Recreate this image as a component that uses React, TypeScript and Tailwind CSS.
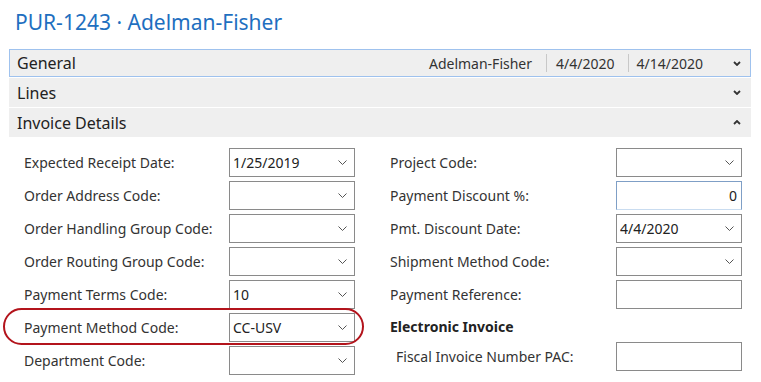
import React from "react";

type Field = {
  label: string;
  value?: string;
  dropdown?: boolean;
  focused?: boolean;
  align?: "left" | "right";
};

const leftFields: Field[] = [
  { label: "Expected Receipt Date:", value: "1/25/2019", dropdown: true },
  { label: "Order Address Code:", dropdown: true },
  { label: "Order Handling Group Code:", dropdown: true },
  { label: "Order Routing Group Code:", dropdown: true },
  { label: "Payment Terms Code:", value: "10", dropdown: true },
  { label: "Payment Method Code:", value: "CC-USV", dropdown: true },
  { label: "Department Code:", dropdown: true },
];

const rightFields: Field[] = [
  { label: "Project Code:", dropdown: true },
  { label: "Payment Discount %:", value: "0", focused: true, align: "right" },
  { label: "Pmt. Discount Date:", value: "4/4/2020", dropdown: true },
  { label: "Shipment Method Code:", dropdown: true },
  { label: "Payment Reference:" },
];

function ThinChevron() {
  return (
    <svg width="9" height="5" viewBox="0 0 9 5" className="shrink-0">
      <polyline points="0.5,0.5 4.5,4.5 8.5,0.5" fill="none" stroke="#555" strokeWidth="1" />
    </svg>
  );
}

function BoldChevron({ up }: { up?: boolean }) {
  return (
    <svg width="8" height="5" viewBox="0 0 8 5" className="shrink-0">
      <polyline
        points={up ? "1,4 4,1 7,4" : "1,1 4,4 7,1"}
        fill="none"
        stroke="#333"
        strokeWidth="1.8"
      />
    </svg>
  );
}

function Input({ field }: { field: Field }) {
  const border = field.focused
    ? "border border-[#7f9fc6] border-b-[#c9dcf0]"
    : "border border-[#8a8a8a]";
  return (
    <div
      className={`flex h-[29px] w-[126px] items-center pl-[3px] pr-[7px] ${border}`}
    >
      <span
        className={`flex-1 truncate text-[14px] text-[#222] ${
          field.align === "right" ? "text-right -mr-[3px]" : ""
        }`}
      >
        {field.value ?? ""}
      </span>
      {field.dropdown && <ThinChevron />}
    </div>
  );
}

function Row({ field, labelWidth, indent }: { field: Field; labelWidth: string; indent?: boolean }) {
  return (
    <div className="flex h-[29px] items-center">
      <div className={`${labelWidth} text-[14px] text-[#333] ${indent ? "pl-[6px]" : ""}`}>
        {field.label}
      </div>
      <Input field={field} />
    </div>
  );
}

function Bar({
  title,
  children,
  up,
  active,
  height,
}: {
  title: string;
  children?: React.ReactNode;
  up?: boolean;
  active?: boolean;
  height: string;
}) {
  return (
    <div
      className={`flex ${height} items-center bg-[#efefef] ${
        active ? "border border-[#9fc2ee] pl-[7px] pr-[9px]" : "pl-[8px] pr-[10px]"
      }`}
    >
      <span className="text-[16px] text-[#222]">{title}</span>
      <div className="ml-auto flex items-center">
        {children}
        <div className="ml-[30px] flex w-[8px] justify-center">
          <BoldChevron up={up} />
        </div>
      </div>
    </div>
  );
}

export default function App() {
  return (
    <div className="relative h-[382px] w-[761px] overflow-hidden bg-white font-['Noto_Sans','Open_Sans',sans-serif]">
      <h1 className="pl-[15px] pt-[7px] text-[21px] leading-[30px] text-[#1e6fc0]">
        PUR-1243 · Adelman-Fisher
      </h1>

      <div className="ml-[9px] mr-[10px] mt-[12px] flex flex-col gap-px">
        <Bar title="General" active height="h-[28px]">
          <span className="text-[14px] text-[#333]">Adelman-Fisher</span>
          <span className="ml-[14px] mr-[9px] h-[18px] w-px bg-[#c8c8c8]" />
          <span className="text-[14px] text-[#333]">4/4/2020</span>
          <span className="ml-[13px] mr-[8px] h-[18px] w-px bg-[#c8c8c8]" />
          <span className="text-[14px] text-[#333]">4/14/2020</span>
        </Bar>
        <Bar title="Lines" height="h-[29px]" />
        <Bar title="Invoice Details" up height="h-[29px]" />
      </div>

      <div className="flex pt-[11px]">
        <div className="flex flex-col gap-[4px] pl-[24px]">
          {leftFields.map((f) => (
            <Row key={f.label} field={f} labelWidth="w-[205px]" />
          ))}
        </div>
        <div className="ml-[35px] flex flex-col gap-[4px]">
          {rightFields.map((f) => (
            <Row key={f.label} field={f} labelWidth="w-[226px]" />
          ))}
          <div className="flex h-[26px] items-end pb-[2px] text-[14px] font-bold text-[#222]">
            Electronic Invoice
          </div>
          <div className="-mt-[1px]">
            <Row
              field={{ label: "Fiscal Invoice Number PAC:" }}
              labelWidth="w-[226px]"
              indent
            />
          </div>
        </div>
      </div>

      {/* highlight around Payment Method Code */}
      <div className="absolute left-[3px] top-[308px] h-[37px] w-[361px] rounded-full border-2 border-[#b3141c]" />
    </div>
  );
}
